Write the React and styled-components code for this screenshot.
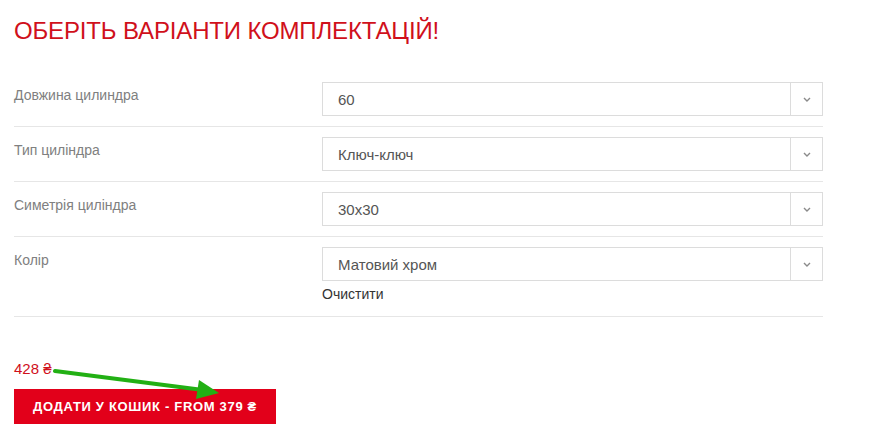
import styled, { createGlobalStyle } from "styled-components";

const GlobalStyle = createGlobalStyle`
  html, body {
    margin: 0;
    padding: 0;
    background: #fff;
    font-family: "Liberation Sans", Arial, sans-serif;
  }
`;

const options = [
  { label: "Довжина цилиндра", value: "60" },
  { label: "Тип циліндра", value: "Ключ-ключ" },
  { label: "Симетрія циліндра", value: "30x30" },
  { label: "Колір", value: "Матовий хром", reset: true },
];

export default function App() {
  return (
    <Page>
      <GlobalStyle />
      <Title>Оберіть варіанти комплектацій!</Title>
      <Variations>
        {options.map((o) => (
          <Row key={o.label}>
            <Label>{o.label}</Label>
            <Value>
              <Select>
                <SelectText>{o.value}</SelectText>
                <Arrow>
                  <svg width="8" height="5" viewBox="0 0 8 5">
                    <polyline
                      points="1,1 4,4 7,1"
                      fill="none"
                      stroke="#8a8a8a"
                      strokeWidth="1.4"
                    />
                  </svg>
                </Arrow>
              </Select>
              {o.reset && <Reset>Очистити</Reset>}
            </Value>
          </Row>
        ))}
      </Variations>
      <Cart>
        <Price>428 ₴</Price>
        <AddButton>Додати у кошик - from 379 ₴</AddButton>
        <Pointer width="190" height="40" viewBox="0 0 190 40">
          <line
            x1="2"
            y1="3"
            x2="150"
            y2="22"
            stroke="#22b014"
            strokeWidth="4"
            strokeLinecap="round"
          />
          <polygon points="146,12 166,25 143,31" fill="#22b014" />
        </Pointer>
      </Cart>
    </Page>
  );
}

const Page = styled.div`
  width: 809px;
  padding: 16px 0 0 14px;
`;

const Title = styled.h2`
  margin: 0;
  font-size: 24px;
  line-height: 30px;
  font-weight: 400;
  letter-spacing: -0.15px;
  text-transform: uppercase;
  color: #d0101b;
`;

const Variations = styled.div`
  margin-top: 26px;
`;

const Row = styled.div`
  display: flex;
  padding: 10px 0;
  border-bottom: 1px solid #e6e6e6;
`;

const Label = styled.div`
  width: 308px;
  padding-top: 3px;
  font-size: 14px;
  line-height: 20px;
  color: #808080;
`;

const Value = styled.div`
  flex: 1;
  display: flex;
  flex-direction: column;
`;

const Select = styled.div`
  display: flex;
  height: 34px;
  box-sizing: border-box;
  border: 1px solid #dcdcdc;
  background: #fff;
`;

const SelectText = styled.div`
  flex: 1;
  display: flex;
  align-items: center;
  padding-left: 15px;
  font-size: 15px;
  color: #555;
`;

const Arrow = styled.div`
  width: 31px;
  border-left: 1px solid #dcdcdc;
  display: flex;
  align-items: center;
  justify-content: center;
`;

const Reset = styled.div`
  margin-top: 3px;
  margin-bottom: 2px;
  font-size: 14px;
  line-height: 20px;
  color: #333;
`;

const Cart = styled.div`
  position: relative;
  padding-top: 42px;
`;

const Price = styled.div`
  font-size: 15px;
  line-height: 20px;
  color: #d0101b;
`;

const AddButton = styled.button`
  display: block;
  margin-top: 10px;
  height: 35px;
  padding: 0 19px;
  border: none;
  background: #e2001a;
  color: #fff;
  font-family: "Liberation Sans", Arial, sans-serif;
  font-size: 13px;
  font-weight: 700;
  letter-spacing: 0.68px;
  text-transform: uppercase;
`;

const Pointer = styled.svg`
  position: absolute;
  left: 39px;
  top: 51px;
  pointer-events: none;
`;
